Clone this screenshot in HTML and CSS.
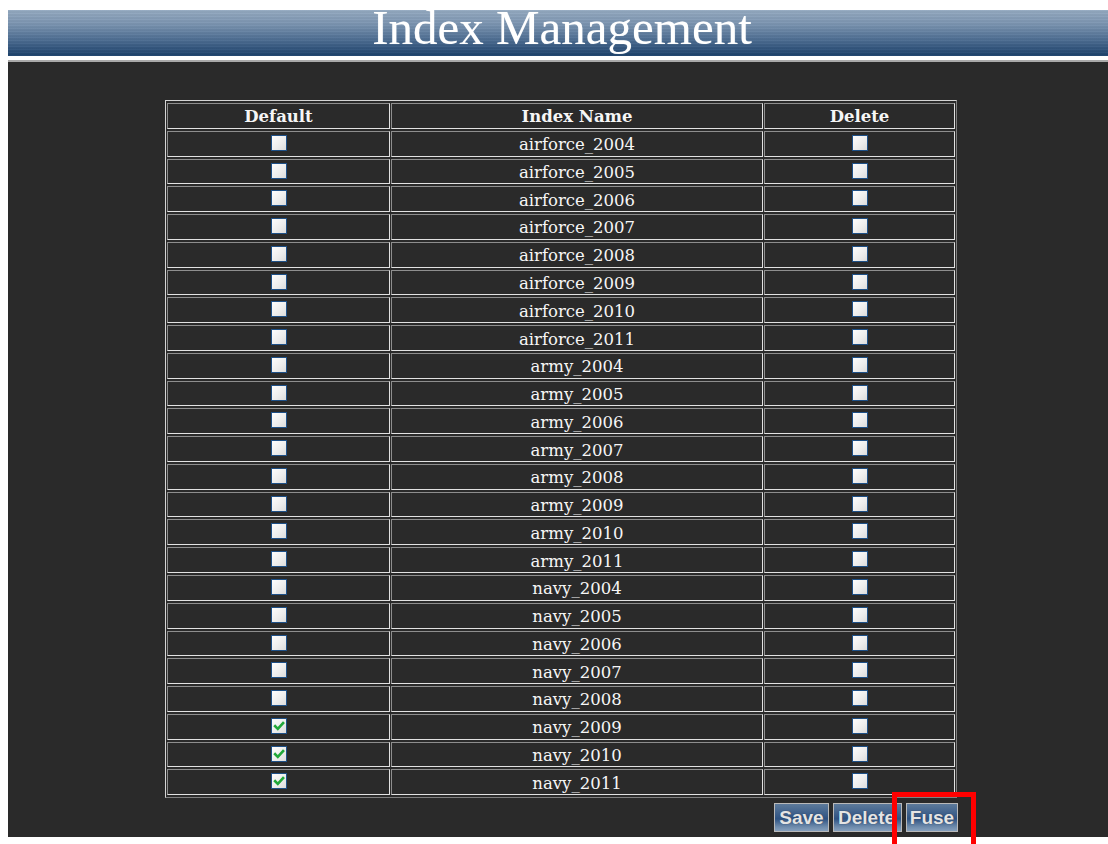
FILE: index.html
```html
<!DOCTYPE html>
<html lang="en">
<head>
<meta charset="utf-8">
<title>Index Management</title>
<link rel="stylesheet" href="styles.css">
</head>
<body>
<div class="page">
  <header class="banner">
    <h1 class="banner-title">Index Management</h1>
  </header>
  <main class="panel">
    <form class="index-form">
      <table class="index-table">
        <thead>
          <tr>
            <th class="col-default">Default</th>
            <th class="col-name">Index Name</th>
            <th class="col-delete">Delete</th>
          </tr>
        </thead>
        <tbody>
          <tr><td class="cb-cell"><span class="cb"></span></td><td class="name">airforce_2004</td><td class="cb-cell"><span class="cb"></span></td></tr>
          <tr><td class="cb-cell"><span class="cb"></span></td><td class="name">airforce_2005</td><td class="cb-cell"><span class="cb"></span></td></tr>
          <tr><td class="cb-cell"><span class="cb"></span></td><td class="name">airforce_2006</td><td class="cb-cell"><span class="cb"></span></td></tr>
          <tr><td class="cb-cell"><span class="cb"></span></td><td class="name">airforce_2007</td><td class="cb-cell"><span class="cb"></span></td></tr>
          <tr><td class="cb-cell"><span class="cb"></span></td><td class="name">airforce_2008</td><td class="cb-cell"><span class="cb"></span></td></tr>
          <tr><td class="cb-cell"><span class="cb"></span></td><td class="name">airforce_2009</td><td class="cb-cell"><span class="cb"></span></td></tr>
          <tr><td class="cb-cell"><span class="cb"></span></td><td class="name">airforce_2010</td><td class="cb-cell"><span class="cb"></span></td></tr>
          <tr><td class="cb-cell"><span class="cb"></span></td><td class="name">airforce_2011</td><td class="cb-cell"><span class="cb"></span></td></tr>
          <tr><td class="cb-cell"><span class="cb"></span></td><td class="name">army_2004</td><td class="cb-cell"><span class="cb"></span></td></tr>
          <tr><td class="cb-cell"><span class="cb"></span></td><td class="name">army_2005</td><td class="cb-cell"><span class="cb"></span></td></tr>
          <tr><td class="cb-cell"><span class="cb"></span></td><td class="name">army_2006</td><td class="cb-cell"><span class="cb"></span></td></tr>
          <tr><td class="cb-cell"><span class="cb"></span></td><td class="name">army_2007</td><td class="cb-cell"><span class="cb"></span></td></tr>
          <tr><td class="cb-cell"><span class="cb"></span></td><td class="name">army_2008</td><td class="cb-cell"><span class="cb"></span></td></tr>
          <tr><td class="cb-cell"><span class="cb"></span></td><td class="name">army_2009</td><td class="cb-cell"><span class="cb"></span></td></tr>
          <tr><td class="cb-cell"><span class="cb"></span></td><td class="name">army_2010</td><td class="cb-cell"><span class="cb"></span></td></tr>
          <tr><td class="cb-cell"><span class="cb"></span></td><td class="name">army_2011</td><td class="cb-cell"><span class="cb"></span></td></tr>
          <tr><td class="cb-cell"><span class="cb"></span></td><td class="name">navy_2004</td><td class="cb-cell"><span class="cb"></span></td></tr>
          <tr><td class="cb-cell"><span class="cb"></span></td><td class="name">navy_2005</td><td class="cb-cell"><span class="cb"></span></td></tr>
          <tr><td class="cb-cell"><span class="cb"></span></td><td class="name">navy_2006</td><td class="cb-cell"><span class="cb"></span></td></tr>
          <tr><td class="cb-cell"><span class="cb"></span></td><td class="name">navy_2007</td><td class="cb-cell"><span class="cb"></span></td></tr>
          <tr><td class="cb-cell"><span class="cb"></span></td><td class="name">navy_2008</td><td class="cb-cell"><span class="cb"></span></td></tr>
          <tr><td class="cb-cell"><span class="cb checked"><svg viewBox="0 0 10 10" class="tick"><path d="M1.8 5.2 L4 7.4 L8.4 2.6" /></svg></span></td><td class="name">navy_2009</td><td class="cb-cell"><span class="cb"></span></td></tr>
          <tr><td class="cb-cell"><span class="cb checked"><svg viewBox="0 0 10 10" class="tick"><path d="M1.8 5.2 L4 7.4 L8.4 2.6" /></svg></span></td><td class="name">navy_2010</td><td class="cb-cell"><span class="cb"></span></td></tr>
          <tr><td class="cb-cell"><span class="cb checked"><svg viewBox="0 0 10 10" class="tick"><path d="M1.8 5.2 L4 7.4 L8.4 2.6" /></svg></span></td><td class="name">navy_2011</td><td class="cb-cell"><span class="cb"></span></td></tr>
        </tbody>
      </table>
      <div class="actions">
        <button type="button" class="btn btn-save">Save</button>
        <button type="button" class="btn btn-delete">Delete</button>
        <button type="button" class="btn btn-fuse">Fuse</button>
      </div>
    </form>
  </main>
  <div class="highlight"></div>
</div>
</body>
</html>
```

FILE: styles.css
```css
html, body {
  background: #ffffff;
}

body {
  margin: 10px 0 0 8px;
  font-family: "DejaVu Serif", "Liberation Serif", serif;
}

.page {
  width: 1100px;
}

/* Title banner */
.banner {
  height: 46px;
  background:
    repeating-linear-gradient(0deg, rgba(255,255,255,0.03) 0 1px, rgba(0,0,0,0.03) 1px 3px),
    linear-gradient(#95aac1 0%, #7c95b1 30%, #4d6d92 65%, #1c416b 100%);
  text-align: center;
  padding-left: 8px;
  box-sizing: border-box;
}

.banner-title {
  margin: 0;
  font-family: "Liberation Serif", "Times New Roman", serif;
  font-weight: normal;
  font-size: 49px;
  line-height: 36px;
  color: #ffffff;
  text-shadow: 0 0 1px rgba(255,255,255,0.4);
}

/* Dark working area */
.panel {
  margin-top: 4px;
  border-top: 2px solid #a9a9a9;
  background: #2a2a2a;
  height: 777px;
  box-sizing: border-box;
  padding: 38px 0 0 157px;
}

.index-form {
  width: 792px;
}

.index-table {
  width: 792px;
  border: 1px outset #d4d4d4;
  border-spacing: 1px 2px;
  color: #f6f6f6;
  font-size: 16.5px;
}

.index-table tr {
  height: 25.78px;
}

.index-table th,
.index-table td {
  border: 1px inset #e2e2e2;
  padding: 0;
  text-align: center;
  vertical-align: middle;
}

.index-table th {
  font-weight: bold;
  font-size: 16.5px;
  padding-top: 1px;
}

.col-default { width: 221px; }
.col-name { width: 370px; }

.name {
  padding-top: 2px !important;
}

.cb-cell {
  vertical-align: top !important;
}

.cb {
  display: block;
  width: 14px;
  height: 14px;
  margin: 3px auto 0;
  border: 1px solid #1e5087;
  background: linear-gradient(135deg, #fdfdfd 0%, #ececec 60%, #dcdcdc 100%);
  position: relative;
}

.tick {
  position: absolute;
  left: 1px;
  top: 1px;
  width: 12px;
  height: 12px;
}

.tick path {
  fill: none;
  stroke: #21a83a;
  stroke-width: 2.2;
  stroke-linecap: square;
}

/* Action buttons */
.actions {
  margin-top: 5px;
  display: flex;
  justify-content: flex-end;
  gap: 4px;
  padding-right: 0;
}

.btn {
  height: 29px;
  padding: 0;
  border: 1px solid #b9b9b9;
  background: linear-gradient(#5d7a9b 0%, #2e5282 55%, #6f8cad 85%, #86a0bd 100%);
  color: #e4e4e4;
  font-family: "Liberation Sans", Arial, sans-serif;
  font-weight: bold;
  font-size: 19px;
  line-height: 27px;
  text-align: center;
  text-shadow: 0 0 1px rgba(0,0,0,0.5);
  overflow: hidden;
  white-space: nowrap;
}

.btn-save { width: 55px; }
.btn-fuse { width: 52px; margin-right: -1px; }

.btn-delete {
  width: 69px;
  text-align: left;
  padding-left: 4px;
}

/* Red outline drawn over the Fuse button */
.highlight {
  position: absolute;
  left: 892px;
  top: 792px;
  width: 74px;
  height: 52px;
  border: 5px solid #ff0000;
  border-bottom: 0;
}
```
